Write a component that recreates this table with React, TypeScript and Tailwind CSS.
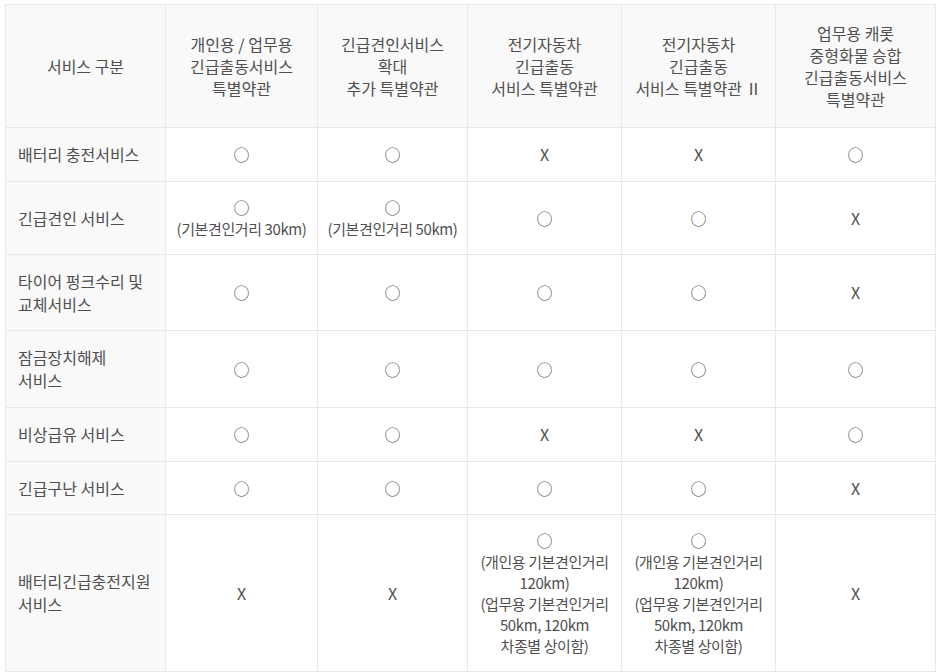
import React from 'react';

type Cell = { mark: 'O' | 'X'; note?: string[] };

interface Row {
  name: string[];
  height: string;
  cells: Cell[];
}

const headers: string[][] = [
  ['개인용 / 업무용', '긴급출동서비스', '특별약관'],
  ['긴급견인서비스', '확대', '추가 특별약관'],
  ['전기자동차', '긴급출동', '서비스 특별약관'],
  ['전기자동차', '긴급출동', '서비스 특별약관 Ⅱ'],
  ['업무용 캐롯', '중형화물 승합', '긴급출동서비스', '특별약관'],
];

const O: Cell = { mark: 'O' };
const X: Cell = { mark: 'X' };

const evNote = ['(개인용 기본견인거리', '120km)', '(업무용 기본견인거리', '50km, 120km', '차종별 상이함)'];

const rows: Row[] = [
  { name: ['배터리 충전서비스'], height: 'h-[54px]', cells: [O, O, X, X, O] },
  {
    name: ['긴급견인 서비스'],
    height: 'h-[73px]',
    cells: [
      { mark: 'O', note: ['(기본견인거리 30km)'] },
      { mark: 'O', note: ['(기본견인거리 50km)'] },
      O,
      O,
      X,
    ],
  },
  { name: ['타이어 펑크수리 및', '교체서비스'], height: 'h-[76px]', cells: [O, O, O, O, X] },
  { name: ['잠금장치해제', '서비스'], height: 'h-[77px]', cells: [O, O, O, O, O] },
  { name: ['비상급유 서비스'], height: 'h-[54px]', cells: [O, O, X, X, O] },
  { name: ['긴급구난 서비스'], height: 'h-[53px]', cells: [O, O, O, O, X] },
  {
    name: ['배터리긴급충전지원', '서비스'],
    height: 'h-[157px]',
    cells: [X, X, { mark: 'O', note: evNote }, { mark: 'O', note: evNote }, X],
  },
];

const colWidths = ['w-[160px]', 'w-[152px]', 'w-[150px]', 'w-[154px]', 'w-[154px]', 'w-[160px]'];

const Mark = ({ cell }: { cell: Cell }) => (
  <div className="leading-[21px]">
    <div>{cell.mark === 'O' ? '○' : 'X'}</div>
    {cell.note?.map((line, i) => (
      <div key={i} className="text-[15px] tracking-[-0.4px]">
        {line}
      </div>
    ))}
  </div>
);

const App = () => {
  return (
    <div className="bg-white min-h-screen pl-[5px] pt-[4px] font-['Noto_Sans_CJK_KR','Noto_Sans',sans-serif] text-[#4f4f4f] text-[16px]">
      <table className="border-collapse table-fixed w-[931px]">
        <colgroup>
          {colWidths.map((w, i) => (
            <col key={i} className={w} />
          ))}
        </colgroup>
        <thead>
          <tr className="h-[123px]">
            <th className="border border-[#e8e8e8] bg-[#f9f9f9] font-normal leading-[22px] text-center">
              서비스 구분
            </th>
            {headers.map((lines, i) => (
              <th key={i} className="border border-[#e8e8e8] bg-[#f9f9f9] font-normal leading-[22px] text-center">
                {lines.map((l, j) => (
                  <div key={j}>{l}</div>
                ))}
              </th>
            ))}
          </tr>
        </thead>
        <tbody>
          {rows.map((row, i) => (
            <tr key={i} className={row.height}>
              <td className="border border-[#e8e8e8] bg-[#f9f9f9] pl-[12px] pr-1 leading-[23px] text-left">
                {row.name.map((l, j) => (
                  <div key={j}>{l}</div>
                ))}
              </td>
              {row.cells.map((cell, j) => (
                <td key={j} className="border border-[#e8e8e8] text-center px-0.5">
                  <Mark cell={cell} />
                </td>
              ))}
            </tr>
          ))}
        </tbody>
      </table>
    </div>
  );
};

export default App;
